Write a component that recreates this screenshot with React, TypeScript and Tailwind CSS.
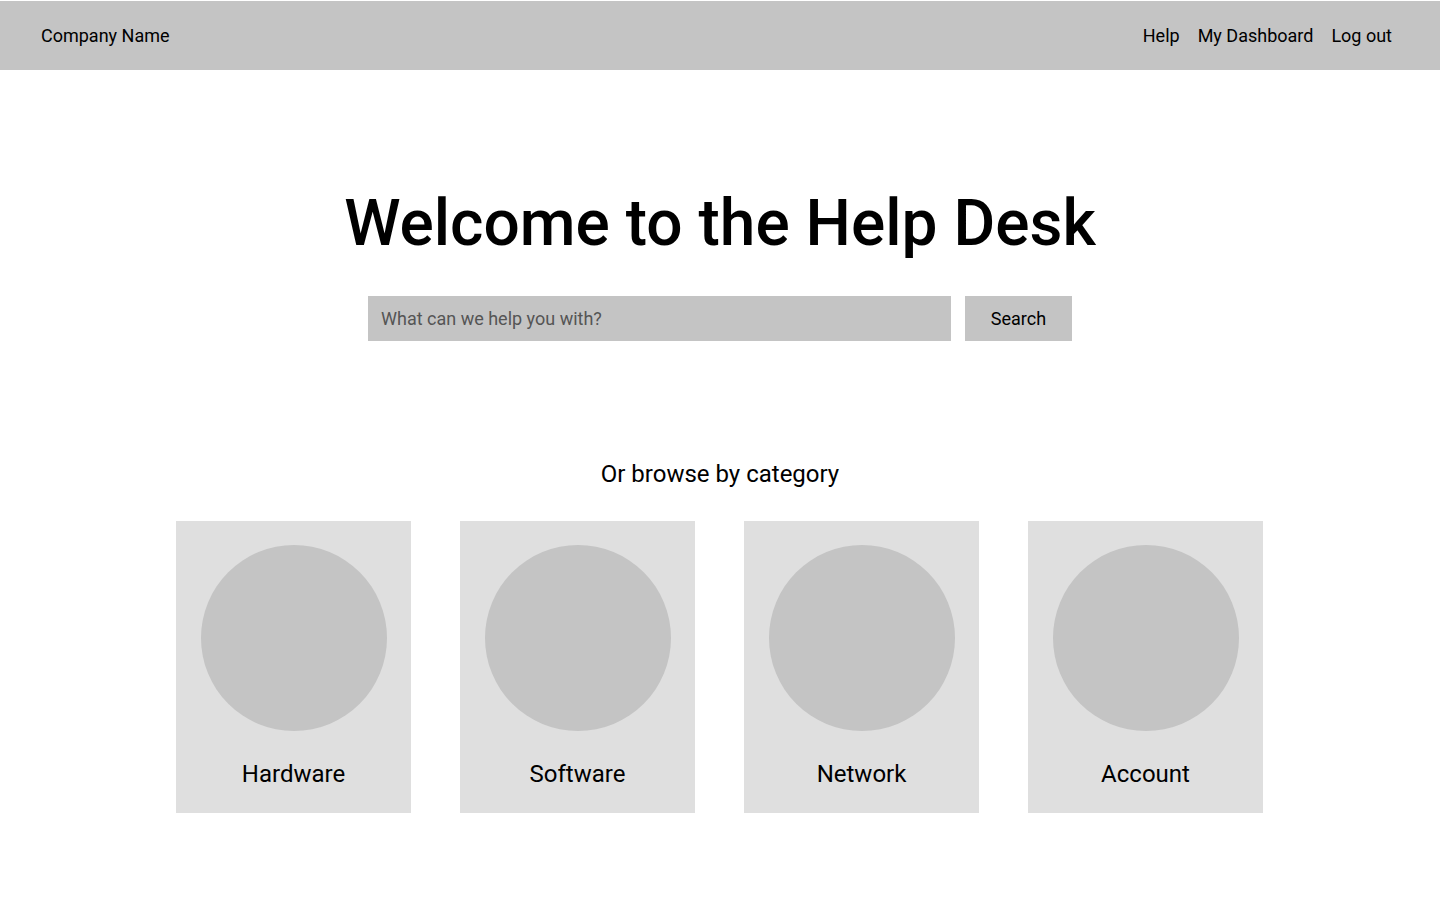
import React from "react";

const categories = ["Hardware", "Software", "Network", "Account"];

function CategoryCard({ label }: { label: string }) {
  return (
    <div className="flex h-[292px] w-[235px] flex-col items-center bg-[#dfdfdf] pt-6">
      <div className="h-[186px] w-[186px] rounded-full bg-[#c4c4c4]" />
      <span className="mt-[28px] text-[24px] leading-[30px] text-black">{label}</span>
    </div>
  );
}

export default function App() {
  return (
    <div className="min-h-screen bg-white pt-px font-['Roboto',sans-serif] text-black">
      {/* Top bar */}
      <header className="flex h-[69px] items-center justify-between bg-[#c4c4c4] pl-[41px] pr-[48px]">
        <span className="text-[18px]">Company Name</span>
        <nav className="flex items-center gap-[18px] text-[18px]">
          <a>Help</a>
          <a>My Dashboard</a>
          <a>Log out</a>
        </nav>
      </header>

      {/* Hero */}
      <section className="flex flex-col items-center pt-[114px]">
        <h1 className="text-[64px] font-medium leading-[80px]">Welcome to the Help Desk</h1>
        <div className="mt-[32px] flex gap-[14px]">
          <input
            type="text"
            placeholder="What can we help you with?"
            className="h-[45px] w-[583px] bg-[#c4c4c4] px-[13px] text-[18px] placeholder:text-[#555] focus:outline-none"
          />
          <button className="h-[45px] w-[107px] bg-[#c4c4c4] text-[18px]">Search</button>
        </div>
      </section>

      {/* Categories */}
      <section className="flex flex-col items-center pt-[118px]">
        <h2 className="text-[24px] leading-[30px]">Or browse by category</h2>
        <div className="mt-[32px] flex gap-[49px] pr-px">
          {categories.map((c) => (
            <CategoryCard key={c} label={c} />
          ))}
        </div>
      </section>
    </div>
  );
}
